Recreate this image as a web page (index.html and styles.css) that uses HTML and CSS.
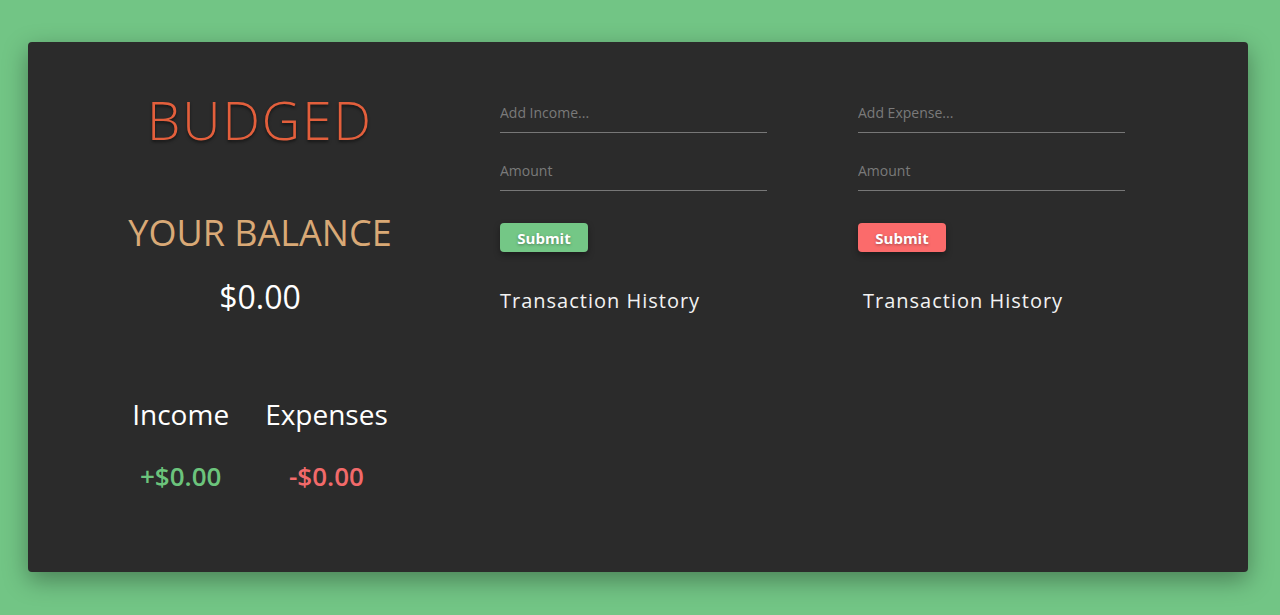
FILE: index.html
```html
<!DOCTYPE html>
<html>
<head>
<meta charset="utf-8">
<link rel="stylesheet" href="styles.css">
</head>
<body>
<div class="card">
  <section class="summary">
    <h1 class="brand">BUDGED</h1>
    <h2 class="balance-label">YOUR BALANCE</h2>
    <div class="balance">$0.00</div>
    <div class="totals">
      <div class="total">
        <div class="total-label">Income</div>
        <div class="total-value plus">+$0.00</div>
      </div>
      <div class="total">
        <div class="total-label">Expenses</div>
        <div class="total-value minus">-$0.00</div>
      </div>
    </div>
  </section>
  <section class="form-col">
    <input class="field" type="text" placeholder="Add Income...">
    <input class="field second" type="text" placeholder="Amount">
    <button class="submit income">Submit</button>
    <h3 class="history">Transaction History</h3>
  </section>
  <section class="form-col">
    <input class="field" type="text" placeholder="Add Expense...">
    <input class="field second" type="text" placeholder="Amount">
    <button class="submit expense">Submit</button>
    <h3 class="history shifted">Transaction History</h3>
  </section>
</div>
</body>
</html>
```
FILE: styles.css
```css
* { box-sizing: border-box; }
html, body { margin: 0; padding: 0; }
body {
  background: #72c585;
  padding: 42px 32px 43px 28px;
  font-family: "Open Sans", "Noto Sans", sans-serif;
}
.card {
  height: 530px;
  width: 1220px;
  background: #2b2b2b;
  border-radius: 4px;
  box-shadow: 0 8px 24px rgba(0,0,0,0.35);
  display: flex;
}
.summary {
  width: 464px;
  text-align: center;
  padding-top: 48px;
}
.brand {
  margin: 0;
  font-size: 53px;
  line-height: 60px;
  font-weight: 300;
  color: #e35f3c;
  letter-spacing: 2px;
  text-shadow: 0 2px 3px rgba(0,0,0,0.5);
}
.balance-label {
  margin: 63px 0 0;
  font-size: 36px;
  line-height: 40px;
  font-weight: 400;
  color: #d9a976;
}
.balance {
  margin-top: 26px;
  font-size: 32px;
  line-height: 36px;
  color: #ffffff;
}
.totals {
  margin-top: 83px;
  display: flex;
  justify-content: center;
  gap: 36px;
}
.total-label {
  font-size: 28px;
  line-height: 32px;
  color: #ffffff;
}
.total-value {
  margin-top: 30px;
  font-size: 26px;
  line-height: 32px;
  font-weight: 600;
}
.plus { color: #6cc47c; }
.minus { color: #f26a6a; }
.form-col {
  width: 358px;
  padding-top: 56px;
  display: flex;
  flex-direction: column;
  align-items: flex-start;
}
.summary + .form-col { margin-left: 8px; }
.field {
  display: block;
  width: 267px;
  height: 35px;
  padding: 0 0 6px 0;
  background: transparent;
  border: none;
  border-bottom: 1px solid #777;
  outline: none;
  color: #ddd;
  font-family: "Open Sans", "Noto Sans", sans-serif;
  font-size: 14px;
}
.field::placeholder { color: #7a7a7a; }
.second { margin-top: 23px; }
.submit {
  margin-top: 32px;
  width: 88px;
  height: 29px;
  border: none;
  border-radius: 4px;
  color: #fff;
  font-family: "Open Sans", "Noto Sans", sans-serif;
  font-weight: 700;
  font-size: 15px;
  text-shadow: 0 1px 3px rgba(0,0,0,0.35);
  box-shadow: 0 3px 6px rgba(0,0,0,0.35);
  padding: 0;
}
.submit.income { background: #74c786; }
.submit.expense { background: #fb6b6b; }
.history {
  margin: 35px 0 0;
  font-size: 20px;
  line-height: 28px;
  font-weight: 500;
  letter-spacing: 1px;
  color: #f2f2f2;
}
.shifted { margin-left: 5px; }
```
